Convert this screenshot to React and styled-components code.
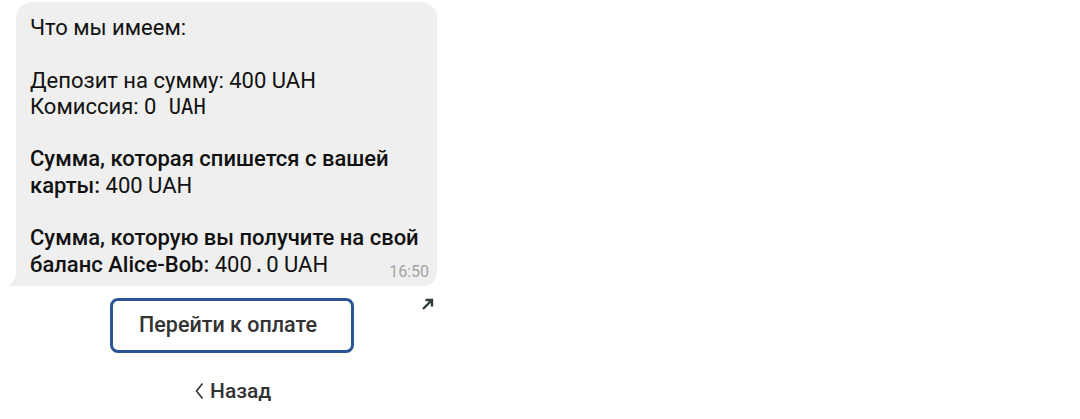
import styled, { createGlobalStyle } from "styled-components";

const GlobalStyle = createGlobalStyle`
  html, body {
    margin: 0;
    padding: 0;
    background: #ffffff;
  }
  body {
    font-family: Roboto, "Noto Sans", sans-serif;
    color: #111111;
  }
`;

const Page = styled.div`
  width: 1080px;
  height: 419px;
  padding-top: 2px;
  box-sizing: border-box;
`;

const Bubble = styled.div`
  position: relative;
  margin-left: 16px;
  width: 421px;
  box-sizing: border-box;
  padding: 13px 8px 8px 14px;
  background: #efefef;
  border-radius: 16px 16px 14px 0;
  font-size: 22px;
  line-height: 26.3px;
`;

const Tail = styled.svg`
  position: absolute;
  left: -9px;
  bottom: 0;
`;

const Line = styled.div`
  height: 26.3px;
`;

const Strong = styled.span`
  font-weight: 500;
`;

const Mono = styled.span`
  font-family: "DejaVu Sans Mono", "Liberation Mono", monospace;
  font-size: 20.5px;
  line-height: 1;
  white-space: pre;
  padding: 0 ${(p) => p.$pad || 0}px;
`;

const Time = styled.span`
  float: right;
  margin-top: 12px;
  font-size: 16px;
  line-height: 16px;
  color: #a3a3a3;
`;

const KeyRow = styled.div`
  display: grid;
  grid-template-columns: 244px 1fr;
  align-items: start;
  padding-left: 110px;
  margin-top: 12px;
  width: 340px;
`;

const KeyButton = styled.button`
  height: 55px;
  box-sizing: border-box;
  border: 3px solid #2c5596;
  border-radius: 8px;
  background: #ffffff;
  font-family: Roboto, sans-serif;
  font-size: 21.5px;
  font-weight: 500;
  color: #333333;
  padding: 0 8px 2px 0;
`;

const Corner = styled.svg`
  margin-left: 67px;
  margin-top: 0;
`;

const Back = styled.div`
  display: flex;
  align-items: center;
  gap: 6px;
  margin-top: 26px;
  padding-left: 195px;
  font-size: 21px;
  font-weight: 500;
  color: #333333;
`;

export default function App() {
  return (
    <>
      <GlobalStyle />
      <Page>
        <Bubble>
          <Tail width="10" height="18" viewBox="0 0 10 18">
            <path d="M10 0 L10 18 L0 18 C5 16 9 12 10 0 Z" fill="#efefef" />
          </Tail>
          <Line>Что мы имеем:</Line>
          <Line />
          <Line>Депозит на сумму: 400 UAH</Line>
          <Line>
            Комиссия: 0<Mono> UAH</Mono>
          </Line>
          <Line />
          <Line>
            <Strong>Сумма, которая спишется с вашей</Strong>
          </Line>
          <Line>
            <Strong>карты:</Strong> 400 UAH
          </Line>
          <Line />
          <Line>
            <Strong>Сумма, которую вы получите на свой</Strong>
          </Line>
          <Line>
            <Strong>баланс Alice-Bob:</Strong> 400<Mono $pad={1}>.</Mono>0 UAH
            <Time>16:50</Time>
          </Line>
        </Bubble>
        <KeyRow>
          <KeyButton>Перейти к оплате</KeyButton>
          <Corner width="13" height="13" viewBox="0 0 13 13">
            <path d="M2 11 L11 2 M4.5 2 H11 V8.5" stroke="#2e3b3b" strokeWidth="2.4" fill="none" />
          </Corner>
        </KeyRow>
        <Back>
          <svg width="9" height="18" viewBox="0 0 9 18">
            <path d="M7.5 1.5 L1.5 9 L7.5 16.5" stroke="#333333" strokeWidth="1.6" fill="none" />
          </svg>
          Назад
        </Back>
      </Page>
    </>
  );
}
